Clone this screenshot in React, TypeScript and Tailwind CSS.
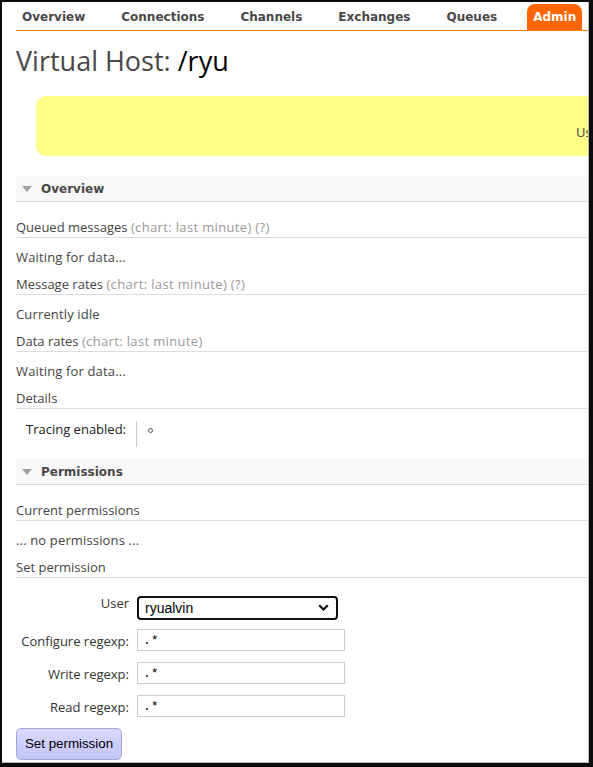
import React from "react";

const tabs = ["Overview", "Connections", "Channels", "Exchanges", "Queues"];

function SectionHeader({ title }: { title: string }) {
  return (
    <div className="flex h-[26px] items-center border-b border-[#dcdcdc] bg-[#f8f8f8] font-['DejaVu_Sans',sans-serif] text-[12px] font-bold text-[#484848]">
      <svg width="10" height="6" viewBox="0 0 10 6" className="ml-[6px] mr-[9px]">
        <path d="M0 0 L10 0 L5 6 Z" fill="#a0a0a0" />
      </svg>
      {title}
    </div>
  );
}

function Heading({ children, first }: { children: React.ReactNode; first?: boolean }) {
  return (
    <div
      className={`${first ? "mt-[15px]" : "mt-[7px]"} h-[21px] border-b border-[#dddddd] text-[13px] leading-[20px] text-[#444]`}
    >
      {children}
    </div>
  );
}

function Body({ children }: { children: React.ReactNode }) {
  return <div className="mt-[9px] h-[20px] text-[13px] leading-[20px] text-[#444] tracking-[0.15px]">{children}</div>;
}

function Muted({ children }: { children: React.ReactNode }) {
  return <span className="tracking-[0.35px] text-[#999]">{children}</span>;
}

function Field({ label }: { label: string }) {
  return (
    <div className="flex items-start gap-[8px]">
      <label className="w-[113px] pt-[1px] text-right text-[13px] leading-[22px] text-[#333]">{label}</label>
      <input
        readOnly
        defaultValue=".*"
        className="h-[22px] w-[208px] border border-[#cccccc] bg-white px-[5px] font-['Liberation_Mono',monospace] text-[13px] text-black outline-none"
      />
    </div>
  );
}

export default function App() {
  return (
    <div className="h-[767px] w-[593px] bg-[#0b0b0b] pl-[2px] pt-[2px]">
      <div className="h-[761px] w-[587px] overflow-hidden border-b border-r border-[#b8b8b8] bg-white font-['Open_Sans',sans-serif]">
        <div className="w-[1000px] pl-[14px]">
          {/* nav */}
          <div className="flex h-[29px] items-end border-b border-[#ff7f00]">
            <div className="-ml-[2px] flex gap-[20px] font-['DejaVu_Sans',sans-serif] text-[12px] font-bold">
              {tabs.map((t) => (
                <div key={t} className="h-[26px] px-[8px] leading-[26px] text-[#484848]">
                  {t}
                </div>
              ))}
              <div className="ml-[2px] h-[26px] rounded-t-[8px] bg-[#ff6600] px-[6px] leading-[26px] text-white">
                Admin
              </div>
            </div>
          </div>

          <h1 className="mt-[14px] h-[32px] text-[27px] leading-[32px] text-[#484848]">
            Virtual Host: <span className="text-black">/ryu</span>
          </h1>

          <div className="ml-[20px] mt-[19px] h-[60px] w-[800px] rounded-[10px] bg-[#ffff88] pl-[540px] pt-[27px] text-[13px] leading-[18px] text-[#484848]">
            Users with permission to this virtual host
          </div>

          <div className="mt-[20px]">
            <SectionHeader title="Overview" />
          </div>

          <Heading first>
            Queued messages <Muted>(chart: last minute) (?)</Muted>
          </Heading>
          <Body>Waiting for data...</Body>
          <Heading>
            Message rates <Muted>(chart: last minute) (?)</Muted>
          </Heading>
          <Body>Currently idle</Body>
          <Heading>
            Data rates <Muted>(chart: last minute)</Muted>
          </Heading>
          <Body>Waiting for data...</Body>
          <Heading>Details</Heading>

          <div className="mt-[12px] flex h-[26px]">
            <div className="w-[120px] pl-[10px] text-[13px] leading-[16px] text-[#222]">Tracing enabled:</div>
            <div className="h-[26px] border-l border-[#cccccc] pl-[11px] pt-[7px]">
              <div className="h-[5px] w-[5px] rounded-full border border-[#555]" />
            </div>
          </div>

          <div className="mt-[12px]">
            <SectionHeader title="Permissions" />
          </div>

          <Heading first>Current permissions</Heading>
          <Body>... no permissions ...</Body>
          <Heading>Set permission</Heading>

          <div className="mt-[17px] flex flex-col gap-[10px]">
            <div className="flex items-start gap-[8px]">
              <label className="w-[113px] text-right text-[13px] leading-[16px] text-[#333]">User</label>
              <div className="relative h-[24px] w-[201px]">
                <select
                  defaultValue="ryualvin"
                  className="h-[24px] w-[201px] appearance-none rounded-[4px] border-2 border-[#111] bg-white pl-[6px] font-['Liberation_Sans',sans-serif] text-[14px] text-black outline-none"
                >
                  <option value="ryualvin">ryualvin</option>
                </select>
                <svg
                  width="11"
                  height="7"
                  viewBox="0 0 11 7"
                  className="pointer-events-none absolute right-[9px] top-[9px]"
                >
                  <path d="M1.2 1.2 L5.5 5.5 L9.8 1.2" fill="none" stroke="#111" strokeWidth="2.2" />
                </svg>
              </div>
            </div>
            <Field label="Configure regexp:" />
            <Field label="Write regexp:" />
            <Field label="Read regexp:" />
          </div>

          <button className="mt-[10px] h-[32px] w-[106px] rounded-[5px] border border-[#a4a4dc] bg-gradient-to-b from-[#d8d8ff] to-[#c4c4fa] font-['Liberation_Sans',sans-serif] text-[13.33px] text-black">
            Set permission
          </button>
        </div>
      </div>
    </div>
  );
}
